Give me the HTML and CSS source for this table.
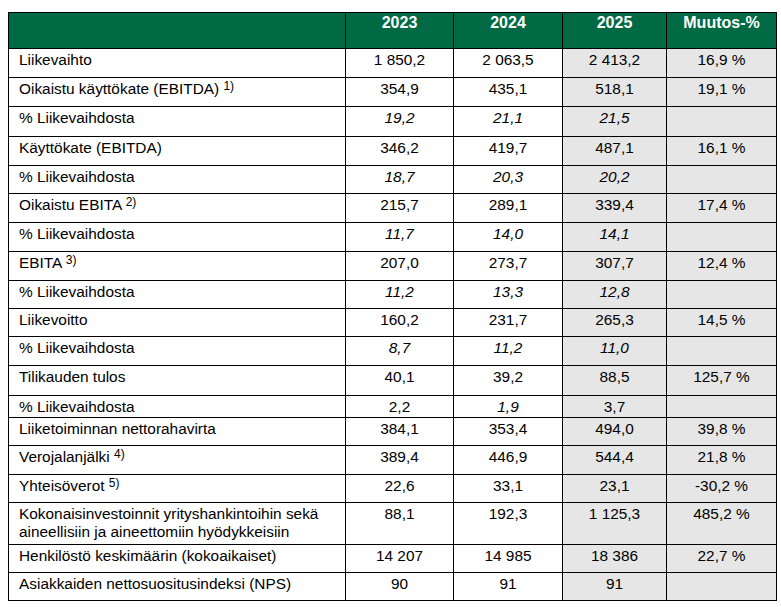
FILE: index.html
```html
<!DOCTYPE html>
<html lang="fi">
<head>
<meta charset="utf-8">
<title>Avainluvut</title>
<link rel="stylesheet" href="styles.css">
</head>
<body>
<table class="kpi">
  <colgroup>
    <col class="c-label"><col class="c-num"><col class="c-num2"><col class="c-cur"><col class="c-chg">
  </colgroup>
  <thead>
    <tr class="h-head">
      <th></th><th>2023</th><th>2024</th><th>2025</th><th>Muutos-%</th>
    </tr>
  </thead>
  <tbody>
    <tr class="h29"><td class="lbl">Liikevaihto</td><td>1 850,2</td><td>2 063,5</td><td class="cur">2 413,2</td><td class="cur">16,9 %</td></tr>
    <tr class="h29"><td class="lbl">Oikaistu käyttökate (EBITDA) <sup>1)</sup></td><td>354,9</td><td>435,1</td><td class="cur">518,1</td><td class="cur">19,1 %</td></tr>
    <tr class="h30"><td class="lbl">% Liikevaihdosta</td><td class="it">19,2</td><td class="it">21,1</td><td class="cur it">21,5</td><td class="cur"></td></tr>
    <tr class="h29"><td class="lbl">Käyttökate (EBITDA)</td><td>346,2</td><td>419,7</td><td class="cur">487,1</td><td class="cur">16,1 %</td></tr>
    <tr class="h28"><td class="lbl">% Liikevaihdosta</td><td class="it">18,7</td><td class="it">20,3</td><td class="cur it">20,2</td><td class="cur"></td></tr>
    <tr class="h29"><td class="lbl">Oikaistu EBITA <sup>2)</sup></td><td>215,7</td><td>289,1</td><td class="cur">339,4</td><td class="cur">17,4 %</td></tr>
    <tr class="h29"><td class="lbl">% Liikevaihdosta</td><td class="it">11,7</td><td class="it">14,0</td><td class="cur it">14,1</td><td class="cur"></td></tr>
    <tr class="h29"><td class="lbl">EBITA <sup>3)</sup></td><td>207,0</td><td>273,7</td><td class="cur">307,7</td><td class="cur">12,4 %</td></tr>
    <tr class="h28"><td class="lbl">% Liikevaihdosta</td><td class="it">11,2</td><td class="it">13,3</td><td class="cur it">12,8</td><td class="cur"></td></tr>
    <tr class="h28"><td class="lbl">Liikevoitto</td><td>160,2</td><td>231,7</td><td class="cur">265,3</td><td class="cur">14,5 %</td></tr>
    <tr class="h29"><td class="lbl">% Liikevaihdosta</td><td class="it">8,7</td><td class="it">11,2</td><td class="cur it">11,0</td><td class="cur"></td></tr>
    <tr class="h30"><td class="lbl">Tilikauden tulos</td><td>40,1</td><td>39,2</td><td class="cur">88,5</td><td class="cur">125,7 %</td></tr>
    <tr class="h22"><td class="lbl">% Liikevaihdosta</td><td>2,2</td><td class="it">1,9</td><td class="cur">3,7</td><td class="cur"></td></tr>
    <tr class="h28"><td class="lbl">Liiketoiminnan nettorahavirta</td><td>384,1</td><td>353,4</td><td class="cur">494,0</td><td class="cur">39,8 %</td></tr>
    <tr class="h29"><td class="lbl">Verojalanjälki <sup>4)</sup></td><td>389,4</td><td>446,9</td><td class="cur">544,4</td><td class="cur">21,8 %</td></tr>
    <tr class="h28"><td class="lbl">Yhteisöverot <sup>5)</sup></td><td>22,6</td><td>33,1</td><td class="cur">23,1</td><td class="cur">-30,2 %</td></tr>
    <tr class="h42"><td class="lbl">Kokonaisinvestoinnit yrityshankintoihin sekä aineellisiin ja aineettomiin hyödykkeisiin</td><td>88,1</td><td>192,3</td><td class="cur">1 125,3</td><td class="cur">485,2 %</td></tr>
    <tr class="h28"><td class="lbl">Henkilöstö keskimäärin (kokoaikaiset)</td><td>14 207</td><td>14 985</td><td class="cur">18 386</td><td class="cur">22,7 %</td></tr>
    <tr class="h28"><td class="lbl">Asiakkaiden nettosuositusindeksi (NPS)</td><td>90</td><td>91</td><td class="cur">91</td><td class="cur"></td></tr>
  </tbody>
</table>
</body>
</html>
```

FILE: styles.css
```css
html, body {
  margin: 0;
  padding: 0;
  background: #ffffff;
}

body {
  padding: 12px 0 0 8px;
  font-family: "Liberation Sans", Arial, sans-serif;
  color: #000000;
}

.kpi {
  border-collapse: collapse;
  table-layout: fixed;
  width: 768px;
  font-size: 15.4px;
  line-height: 18px;
}

.c-label { width: 337px; }
.c-num { width: 108px; }
.c-num2 { width: 109px; }
.c-cur { width: 104px; }
.c-chg { width: 110px; }

.kpi th,
.kpi td {
  border: 1px solid #000000;
  vertical-align: top;
  text-align: center;
  padding: 2px 4px 0 4px;
  white-space: nowrap;
  overflow: hidden;
}

.kpi th {
  background: #006a45;
  color: #ffffff;
  font-weight: bold;
  font-size: 16px;
  padding-top: 1px;
}

.kpi td.lbl {
  text-align: left;
  padding-left: 10px;
  white-space: normal;
}

.kpi td.cur {
  background: #e7e6e6;
}

.kpi td.it {
  font-style: italic;
}

.kpi sup {
  font-size: 12px;
  line-height: 0;
  vertical-align: 4px;
}

.h-head { height: 36px; }
.h22 { height: 22px; }
.h28 { height: 28px; }
.h29 { height: 29px; }
.h30 { height: 30px; }
.h42 { height: 42px; }
```
